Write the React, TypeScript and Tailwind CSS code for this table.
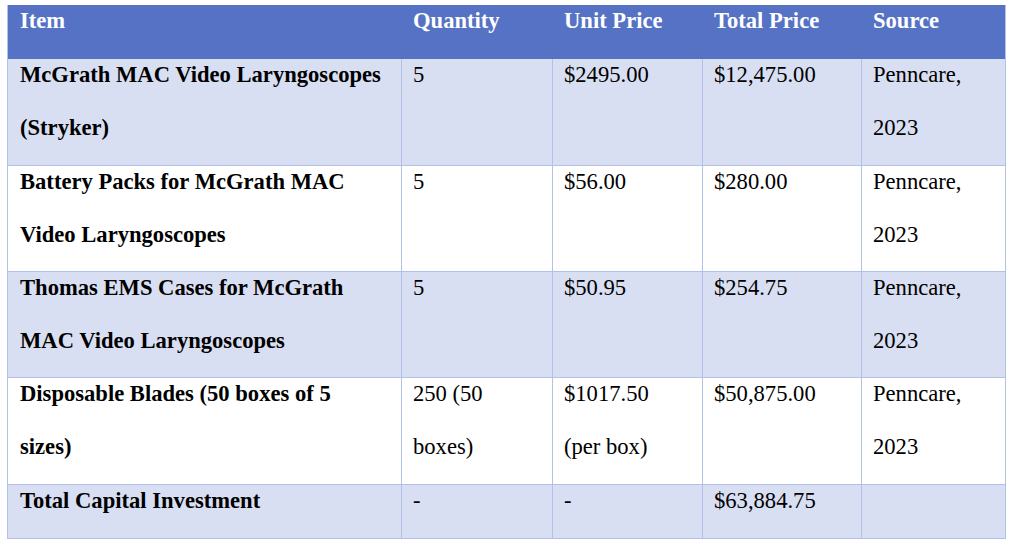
import React from "react";

type Row = { cells: string[]; bg: string; h: string };

const rows: Row[] = [
  { cells: ["McGrath MAC Video Laryngoscopes (Stryker)", "5", "$2495.00", "$12,475.00", "Penncare, 2023"], bg: "bg-[#d9dff2]", h: "h-[106px]" },
  { cells: ["Battery Packs for McGrath MAC Video Laryngoscopes", "5", "$56.00", "$280.00", "Penncare, 2023"], bg: "bg-white", h: "h-[106px]" },
  { cells: ["Thomas EMS Cases for McGrath MAC Video Laryngoscopes", "5", "$50.95", "$254.75", "Penncare, 2023"], bg: "bg-[#d9dff2]", h: "h-[106px]" },
  { cells: ["Disposable Blades (50 boxes of 5 sizes)", "250 (50 boxes)", "$1017.50 (per box)", "$50,875.00", "Penncare, 2023"], bg: "bg-white", h: "h-[107px]" },
  { cells: ["Total Capital Investment", "-", "-", "$63,884.75", ""], bg: "bg-[#d9dff2]", h: "h-[54px]" },
];

const widths = ["w-[394px]", "w-[151px]", "w-[150px]", "w-[159px]", "w-[143px]"];
const headers = ["Item", "Quantity", "Unit Price", "Total Price", "Source"];

export default function App() {
  return (
    <div className="w-[1011px] h-[547px] bg-white pt-[5px] pl-[7px] text-[22.6px] leading-[53px] text-black" style={{ fontFamily: '"Liberation Serif", "Times New Roman", serif' }}>
      <div className="w-[999px] border-x border-b border-[#b4c1e6]">
        <div className="flex h-[54px] bg-[#5572c4] text-white font-bold">
          {headers.map((h, i) => (
            <div key={i} className={`${widths[i]} shrink-0 ${i === 0 ? "pl-[12px]" : "pl-[11px]"} overflow-hidden`}>
              <div className="-mt-[11px]">{h}</div>
            </div>
          ))}
        </div>
        {rows.map((r, ri) => (
          <div key={ri} className={`flex ${r.h} ${r.bg} ${ri > 0 ? "border-t border-[#b4c1e6]" : ""}`}>
            {r.cells.map((c, ci) => (
              <div
                key={ci}
                className={`${widths[ci]} shrink-0 ${ci === 0 ? "pl-[12px] font-bold" : "pl-[11px]"} ${ci < 4 ? "border-r border-[#b4c1e6]" : ""} pr-[14px] overflow-hidden`}
              >
                <div className="-mt-[11px]">{c}</div>
              </div>
            ))}
          </div>
        ))}
      </div>
    </div>
  );
}
